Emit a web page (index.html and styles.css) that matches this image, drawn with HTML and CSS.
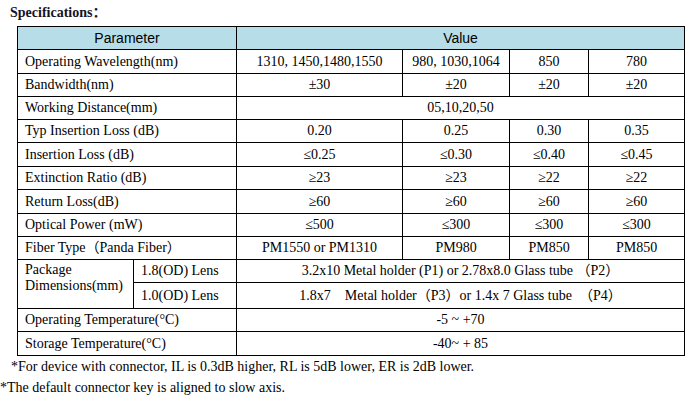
FILE: index.html
```html
<!DOCTYPE html>
<html>
<head>
<meta charset="utf-8">
<link rel="stylesheet" href="styles.css">
</head>
<body>
<div class="page">
  <h1 class="title">Specifications：</h1>
  <table class="spec">
    <colgroup>
      <col class="c1"><col class="c2"><col class="c3"><col class="c4"><col class="c5"><col class="c6">
    </colgroup>
    <thead>
      <tr class="r23"><th colspan="2">Parameter</th><th colspan="4">Value</th></tr>
    </thead>
    <tbody>
      <tr class="r24"><td colspan="2" class="lbl">Operating Wavelength(nm)</td><td>1310, 1450,1480,1550</td><td>980, 1030,1064</td><td>850</td><td>780</td></tr>
      <tr class="r23"><td colspan="2" class="lbl">Bandwidth(nm)</td><td>±30</td><td>±20</td><td>±20</td><td>±20</td></tr>
      <tr class="r23"><td colspan="2" class="lbl">Working Distance(mm)</td><td colspan="4">05,10,20,50</td></tr>
      <tr class="r23"><td colspan="2" class="lbl">Typ Insertion Loss (dB)</td><td>0.20</td><td>0.25</td><td>0.30</td><td>0.35</td></tr>
      <tr class="r24"><td colspan="2" class="lbl">Insertion Loss (dB)</td><td>≤0.25</td><td>≤0.30</td><td>≤0.40</td><td>≤0.45</td></tr>
      <tr class="r23"><td colspan="2" class="lbl">Extinction Ratio (dB)</td><td>≥23</td><td>≥23</td><td>≥22</td><td>≥22</td></tr>
      <tr class="r24"><td colspan="2" class="lbl">Return Loss(dB)</td><td>≥60</td><td>≥60</td><td>≥60</td><td>≥60</td></tr>
      <tr class="r23"><td colspan="2" class="lbl">Optical Power (mW)</td><td>≤500</td><td>≤300</td><td>≤300</td><td>≤300</td></tr>
      <tr class="r23"><td colspan="2" class="lbl">Fiber Type（Panda Fiber）</td><td>PM1550 or PM1310</td><td>PM980</td><td>PM850</td><td>PM850</td></tr>
      <tr class="r23"><td rowspan="2" class="lbl pkg">Package<br>Dimensions(mm)</td><td class="lbl">1.8(OD) Lens</td><td colspan="4">3.2x10 Metal holder (P1) or 2.78x8.0 Glass tube （P2）</td></tr>
      <tr class="r26"><td class="lbl">1.0(OD) Lens</td><td colspan="4">1.8x7&nbsp;&nbsp;&nbsp; Metal holder（P3）or 1.4x 7 Glass tube &nbsp;（P4）</td></tr>
      <tr class="r23"><td colspan="2" class="lbl">Operating Temperature(°C)</td><td colspan="4">-5 ~ +70</td></tr>
      <tr class="r24"><td colspan="2" class="lbl">Storage Temperature(°C)</td><td colspan="4">-40~ + 85</td></tr>
    </tbody>
  </table>
  <p class="note note1">*For device with connector, IL is 0.3dB higher, RL is 5dB lower, ER is 2dB lower.</p>
  <p class="note note2">*The default connector key is aligned to slow axis.</p>
</div>
</body>
</html>
```
FILE: styles.css
```css
html, body {
  margin: 0;
  padding: 0;
  background: #ffffff;
}
body {
  font-family: "Liberation Serif", "Noto Sans CJK SC", serif;
  font-size: 14px;
  color: #000;
}
.page {
  width: 690px;
  height: 402px;
  overflow: hidden;
}
.title {
  margin: 0;
  padding: 5px 0 0 10px;
  height: 21px;
  font-size: 14px;
  font-weight: bold;
  line-height: 16px;
  color: #141428;
}
.spec {
  margin-left: 17px;
  border-collapse: collapse;
  table-layout: fixed;
  width: 667px;
}
.c1 { width: 116px; }
.c2 { width: 103px; }
.c3 { width: 166px; }
.c4 { width: 107px; }
.c5 { width: 79px; }
.c6 { width: 96px; }
.spec th, .spec td {
  border: 1px solid #000;
  padding: 0;
  text-align: center;
  vertical-align: middle;
  line-height: 16px;
  white-space: nowrap;
  overflow: hidden;
}
.spec th {
  background: #b7dde8;
  font-family: "Liberation Sans", Arial, sans-serif;
  font-weight: normal;
  font-size: 14px;
}
.spec td.lbl {
  text-align: left;
  padding-left: 7px;
}
.spec td.pkg {
  vertical-align: top;
  padding-top: 2px;
  white-space: normal;
}
.r23 { height: 23px; }
.r24 { height: 24px; }
.r26 { height: 26px; }
.note {
  margin: 0;
  line-height: 16px;
}
.note1 {
  padding: 3px 0 0 11px;
}
.note2 {
  padding: 5px 0 0 0;
}
```
